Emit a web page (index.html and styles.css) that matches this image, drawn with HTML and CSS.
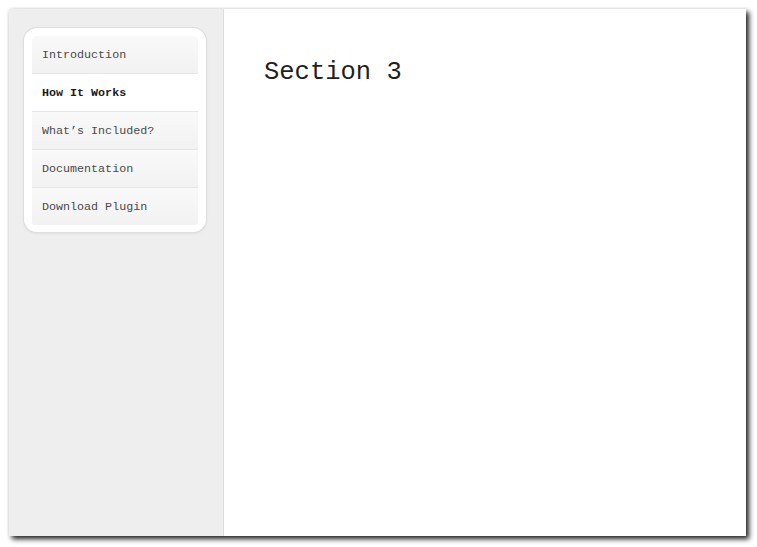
FILE: index.html
```html
<!DOCTYPE html>
<html>
<head>
<meta charset="utf-8">
<link rel="stylesheet" href="styles.css">
</head>
<body>
<div class="frame">
  <aside class="sidebar">
    <nav class="menu">
      <a class="item first">Introduction</a>
      <a class="item active">How It Works</a>
      <a class="item">What’s Included?</a>
      <a class="item">Documentation</a>
      <a class="item last">Download Plugin</a>
    </nav>
  </aside>
  <main class="content">
    <h1 class="title">Section 3</h1>
  </main>
</div>
</body>
</html>
```
FILE: styles.css
```css
html, body {
  margin: 0;
  padding: 0;
  background: #ffffff;
}
body {
  box-sizing: border-box;
  min-height: 547px;
  padding: 9px 0 0 9px;
  font-family: "Liberation Mono", "DejaVu Sans Mono", monospace;
}
.frame {
  display: flex;
  width: 737px;
  height: 527px;
  background: #ffffff;
  box-shadow: 3px 3px 5px rgba(20, 20, 20, 0.95), 0 0 3px rgba(0, 0, 0, 0.08);
}
.sidebar {
  width: 215px;
  box-sizing: border-box;
  background: #eeeeee;
  border-right: 1px solid #dcdcdc;
  padding: 19px 0 0 15px;
}
.menu {
  width: 182px;
  box-sizing: border-box;
  background: #ffffff;
  border-radius: 13px;
  padding: 8px 8px 7px 8px;
  box-shadow: 0 0 0 1px #dedede, 0 1px 3px rgba(0, 0, 0, 0.12);
  display: flex;
  flex-direction: column;
}
.item {
  display: flex;
  align-items: center;
  height: 37px;
  padding-left: 10px;
  font-size: 11.7px;
  color: #4a4a4a;
  background: linear-gradient(#f9f9f9, #f2f2f2);
  border-bottom: 1px solid #e6e6e6;
}
.item.first {
  border-radius: 5px 5px 0 0;
}
.item.last {
  border-bottom: none;
  border-radius: 0 0 3px 3px;
}
.item.active {
  background: #ffffff;
  color: #1a1a1a;
  font-weight: bold;
}
.content {
  flex: 1;
  padding: 0 0 0 40px;
}
.title {
  margin: 0;
  padding-top: 49px;
  font-size: 25.5px;
  font-weight: normal;
  color: #1f1f1f;
  line-height: 30px;
}
```
